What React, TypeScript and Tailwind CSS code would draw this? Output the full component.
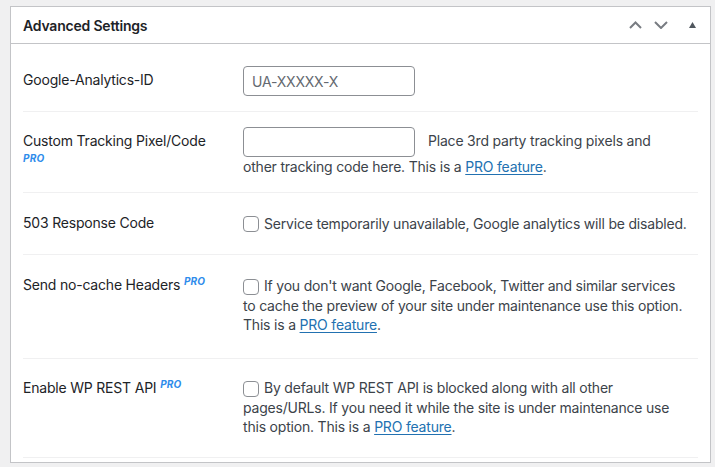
const Pro = ({ className = '' }: { className?: string }) => (
  <span className={`text-[10px] font-bold italic text-[#2e8ceb] tracking-[0.2px] ${className}`}>PRO</span>
);

const Checkbox = () => (
  <input
    type="checkbox"
    className="appearance-none inline-block w-4 h-4 align-middle -mt-[1px] mr-[5px] border border-[#8c8f94] rounded-[4px] bg-white"
  />
);

const ProLink = () => (
  <>
    This is a{' '}
    <a href="#" className="text-[#2271b1] underline underline-offset-2">
      PRO feature
    </a>
    .
  </>
);

const ChevronUp = () => (
  <svg width="13" height="8" viewBox="0 0 13 8" fill="none">
    <path d="M1 7L6.5 1.5L12 7" stroke="#787c82" strokeWidth="2" />
  </svg>
);

const ChevronDown = () => (
  <svg width="14" height="8" viewBox="0 0 14 8" fill="none">
    <path d="M1 1L7 7L13 1" stroke="#787c82" strokeWidth="2" />
  </svg>
);

const Row = ({
  label,
  children,
  thClass = 'pt-[21px] pb-5',
  tdClass = 'pt-[21px] pb-[21px]',
}: {
  label: React.ReactNode;
  children: React.ReactNode;
  thClass?: string;
  tdClass?: string;
}) => (
  <div className="flex border-b border-[#f0f0f1]">
    <div className={`w-[210px] shrink-0 pr-[10px] text-[14px] leading-[18px] text-[#1d2327] ${thClass}`}>{label}</div>
    <div className={`flex-1 px-[10px] text-[14px] leading-[19.6px] text-[#3c434a] ${tdClass}`}>{children}</div>
  </div>
);

export default function App() {
  return (
    <div
      className="min-h-screen bg-[#f0f0f1] pt-[6px] pl-[10px] tracking-[-0.2px]"
      style={{ fontFamily: 'Inter, "Noto Sans", sans-serif' }}
    >
      <div className="w-[701px] bg-white border border-[#c3c4c7]">
        {/* header */}
        <div className="flex items-center h-[37px] border-b border-[#c3c4c7] pl-3">
          <h2 className="flex-1 text-[14px] font-semibold text-[#1d2327]">Advanced Settings</h2>
          <div className="flex items-center">
            <span className="w-[26px] flex justify-center">
              <ChevronUp />
            </span>
            <span className="w-[26px] flex justify-center">
              <ChevronDown />
            </span>
            <span className="w-[36px] flex justify-center">
              <svg width="7" height="6" viewBox="0 0 7 6">
                <path d="M3.5 0L7 6H0Z" fill="#50575e" />
              </svg>
            </span>
          </div>
        </div>

        <div className="px-3 pb-1">
          <Row label="Google-Analytics-ID" thClass="pt-[27px] pb-5" tdClass="pt-[22px] pb-[15px]">
            <input
              type="text"
              placeholder="UA-XXXXX-X"
              className="block w-[172px] h-[30px] px-2 border border-[#8c8f94] rounded-[4px] text-[14px] placeholder:text-[#646970] outline-none"
            />
          </Row>

          <Row
            label={
              <>
                Custom Tracking Pixel/Code
                <br />
                <Pro className="leading-[14px] block mt-[1px]" />
              </>
            }
            thClass="pt-5 pb-5"
            tdClass="pt-[15px] pb-[15px]"
          >
            <input
              type="text"
              className="inline-block align-middle w-[172px] h-[30px] px-2 mr-[13px] border border-[#8c8f94] rounded-[4px] outline-none"
            />
            Place 3rd party tracking pixels and other tracking code here. <ProLink />
          </Row>

          <Row label="503 Response Code">
            <Checkbox />
            Service temporarily unavailable, Google analytics will be disabled.
          </Row>

          <Row
            label={
              <>
                Send no-cache Headers <Pro className="relative -top-[5px]" />
              </>
            }
            tdClass="pt-[21px] pb-[23px]"
          >
            <Checkbox />
            If you don't want Google, Facebook, Twitter and similar services to cache the preview of your site under
            maintenance use this option. <ProLink />
          </Row>

          <Row
            label={
              <>
                Enable WP REST API <Pro className="relative -top-[5px]" />
              </>
            }
            thClass="pt-[20px] pb-5"
            tdClass="pt-[19px] pb-[20px]"
          >
            <Checkbox />
            By default WP REST API is blocked along with all other pages/URLs. If you need it while the site is under
            maintenance use this option. <ProLink />
          </Row>
        </div>
      </div>
    </div>
  );
}
